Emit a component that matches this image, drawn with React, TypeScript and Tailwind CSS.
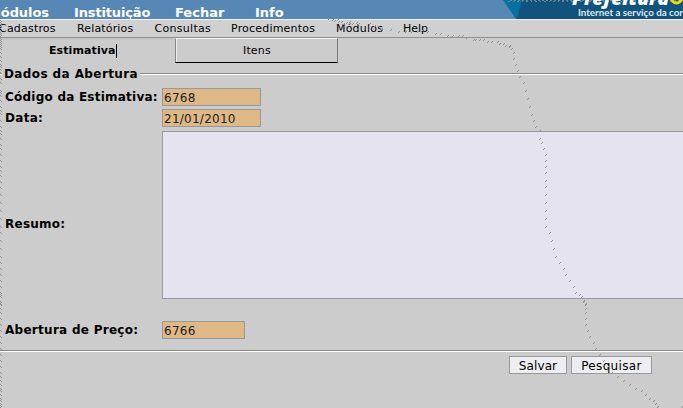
import React from "react";

const trail: number[][] = [
  [333,20],[335,21],[338,20],[339,22],[342,22],[344,24],[347,23],[350,22],[353,24],[357,23],[359,24],[370,24],[375,26],[382,29],[391,30],[399,32],[406,32],[412,32],[418,32],[422,31],[428,32],[436,34],[441,34],[448,36],[453,36],[459,36],[463,36],[467,38],[474,40],[476,40],[480,40],[484,40],
  [488,42],[492,42],[498,42],[500,44],[504,44],[506,46],[510,46],[510,47],[512,49],[514,53],[514,59],[516,65],[518,71],[520,77],[524,83],[526,91],[528,99],[530,107],[532,115],[534,121],[536,127],[540,131],[540,139],[542,143],[544,149],
  [546,155],[546,161],[546,167],[546,173],[546,181],[546,187],[546,195],[546,203],[546,211],[546,219],[546,227],[550,233],[552,241],[554,249],[556,257],[560,263],[564,269],[566,275],[570,281],[574,287],[576,293],[580,295],[582,297],
  [584,301],[584,302],[586,304],[586,305],[586,309],[586,313],[586,319],[586,325],[588,331],[590,337],[594,343],[596,349],[600,355],[604,361],[608,367],[612,373],[618,377],[624,381],[630,385],[636,389],[642,391],[646,395],[650,399],[654,401],[656,404],[658,407],[682,407],
];
const edge: number[] = [
  20,22,24,26,28,30,32,34,36,38,40,42,44,46,48,52,56,60,64,66,69,72,78,82,90,92,95,100,106,110,113,120,126,130,133,138,144,148,154,160,166,170,175,181,187,194,202,210,218,226,232,240,248,256,262,268,274,280,286,292,294,296,
  301,303,304,308,312,318,324,330,336,342,348,354,360,366,372,376,380,384,388,390,394,398,400,403,405,407,
];
const slashes = trail.map(([x, y]) => `M${x} ${y - 1}h1v1h-1zM${x - 1} ${y}h1v1h-1z`).join("");
const edgeMarks = edge.map((y) => `M0 ${y}h1v1h-1zM1 ${y + 1}h1v1h-1z`).join("");
const skyMarks = [[4,2],[12,0],[20,2],[28,0],[34,4],[42,1],[50,3],[62,9],[72,2],[84,5],[98,3],[112,6],[132,4],[156,13],[168,13],[186,4],[204,3],[216,4],[232,3],[244,3],[256,4],[266,5],[278,6],[288,9],[300,14],[312,14],[322,16],[328,18]]
  .map(([x, y]) => `M${x + 1} ${y}h1v1h-1zM${x} ${y + 1}h1v1h-1z`).join("");

function Field({ value, className }: { value: string; className: string }) {
  return (
    <div className={`h-[18px] shrink-0 border border-[#999] bg-[#deb887] pl-px pt-px text-[12px] leading-[16px] tracking-[0.25px] text-[#222] ${className}`}>
      {value}
    </div>
  );
}

function Button({ label, className }: { label: string; className: string }) {
  return (
    <button className={`h-[18px] border border-[#999] bg-[#eeeef2] pt-px text-center text-[12px] leading-[16px] text-black ${className}`}>
      {label}
    </button>
  );
}

function Banner() {
  return (
    <svg className="h-[19px] w-[181px] shrink-0" viewBox="502 0 181 19">
      <path d="M503 0H523L518 19H516Z" fill="#08709f" />
      <path d="M522 0H683V19H517Z" fill="#12537d" />
      <path d="M510 .5H683" stroke="#668597" strokeDasharray="2 2" />
      <path d="M508 1.5H683" stroke="#668597" strokeDasharray="2 3 1 3" />
      <text x="572" y="4.5" fontFamily="'Open Sans', sans-serif" fontSize="18" fontWeight="800" fontStyle="italic" fill="white" textLength="97" lengthAdjust="spacingAndGlyphs">Prefeitura</text>
      <ellipse cx="676.5" cy="-2" rx="5" ry="5" fill="none" stroke="#f3da00" strokeWidth="3" />
      <text x="578" y="15.5" fontFamily="Lato, sans-serif" fontSize="10" fill="#dce8f0" textLength="105" lengthAdjust="spacingAndGlyphs">Internet a serviço da cor</text>
    </svg>
  );
}

export default function App() {
  return (
    <div className="relative flex h-[408px] w-[683px] flex-col overflow-hidden bg-[#ccc] font-['DejaVu_Sans',sans-serif] text-black">
      <header className="flex h-[19px] shrink-0 bg-[#5787b5] text-[13px] font-bold leading-[15px] text-white">
        <nav className="flex w-[502px] shrink-0 whitespace-nowrap pt-[5px]">
          <span className="w-[74px] shrink-0"><span className="-ml-[12px] tracking-[-0.1px]">Módulos</span></span>
          <span className="w-[101px] shrink-0 tracking-[-0.15px]">Instituição</span>
          <span className="w-[80px] shrink-0">Fechar</span>
          <span>Info</span>
        </nav>
        <Banner />
      </header>
      <nav className="flex h-[19px] shrink-0 whitespace-nowrap border-b border-t border-b-[#909090] border-t-[#f0f0f0] bg-[#d0d0d0] pt-[2px] text-[11px] leading-[13px]">
        <span className="-ml-[1px] w-[78px] shrink-0 tracking-[0.2px]">Cadastros</span>
        <span className="w-[77.5px] shrink-0 tracking-[0.15px]">Relatórios</span>
        <span className="w-[76.5px] shrink-0 tracking-[0.3px]">Consultas</span>
        <span className="w-[105px] shrink-0 tracking-[0.2px]">Procedimentos</span>
        <span className="w-[67px] shrink-0 tracking-[0.2px]">Módulos</span>
        <span>Help</span>
      </nav>
      <div className="flex h-[25px] shrink-0 text-[11px]">
        <div className="flex w-[175px] shrink-0 border-t-2 border-[#c4c4c4] pl-[49px] pt-[4px] font-bold leading-[14px]">
          <span className="h-[14px] border-r border-black tracking-[0.1px]">Estimativa</span>
        </div>
        <div className="w-[163px] border-b border-l border-r border-t border-b-black border-l-[#888] border-r-[#777] border-t-[#f2f2f2] shadow-[inset_1px_0_0_#eee] pl-[67px] pt-[5px] leading-[13px] tracking-[0.15px]">Itens</div>
      </div>
      <main className="flex h-[287px] shrink-0 flex-col text-[12px] font-bold">
        <div className="flex h-[21px] shrink-0 items-center pt-[1px]">
          <div className="h-[2px] w-[2px] border-b border-t border-b-white border-t-[#888]" />
          <h2 className="w-[138px] shrink-0 whitespace-nowrap pl-[2px] leading-[14px] tracking-[0.4px]">Dados da Abertura</h2>
          <div className="h-[2px] flex-1 border-b border-t border-b-white border-t-[#888]" />
        </div>
        <div className="mt-[4px] flex h-[18px] shrink-0 items-center whitespace-nowrap">
          <label className="w-[162px] shrink-0 pl-[5px] tracking-[0.23px]">Código da Estimativa:</label>
          <Field value="6768" className="w-[99px] font-normal" />
        </div>
        <div className="mt-[3px] flex h-[18px] shrink-0 items-center">
          <label className="w-[162px] shrink-0 pl-[5px] tracking-[0.3px]">Data:</label>
          <Field value="21/01/2010" className="w-[99px] font-normal" />
        </div>
        <div className="mt-[4px] flex h-[168px] shrink-0 items-center">
          <label className="w-[162px] shrink-0 pl-[5px] pt-[17px] tracking-[0.25px]">Resumo:</label>
          <div className="h-[168px] flex-1 border-b border-l border-t border-[#999] bg-[#e5e3f0]" />
        </div>
        <div className="mt-[22px] flex h-[18px] shrink-0 items-center">
          <label className="w-[162px] shrink-0 whitespace-nowrap pl-[5px] tracking-[0.28px]">Abertura de Preço:</label>
          <Field value="6766" className="w-[83px] font-normal" />
        </div>
      </main>
      <footer className="flex h-[58px] shrink-0 gap-[4px] border-t border-[#888] pl-[509px] pt-[5px] shadow-[inset_0_1px_0_white]">
        <Button label="Salvar" className="w-[58px] tracking-[0.1px]" />
        <Button label="Pesquisar" className="w-[81px] tracking-[0.35px]" />
      </footer>
      <svg className="pointer-events-none absolute inset-0 h-[408px] w-[683px]" viewBox="0 0 683 408" shapeRendering="crispEdges">
        <path d={slashes + edgeMarks} fill="#929292" />
        <path d={skyMarks} fill="#6d889d" />
      </svg>
    </div>
  );
}
